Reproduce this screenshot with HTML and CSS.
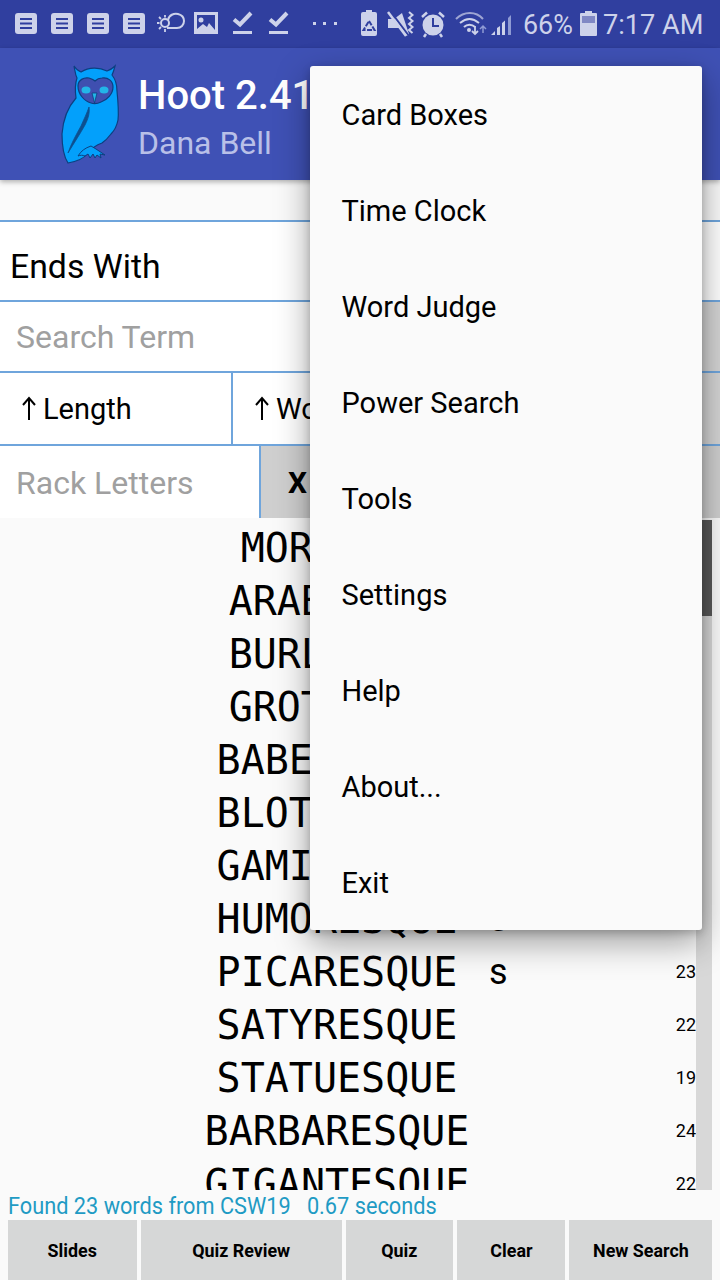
FILE: index.html
```html
<!DOCTYPE html>
<html lang="en">
<head>
<meta charset="utf-8">
<title>Hoot</title>
<link rel="stylesheet" href="styles.css">
</head>
<body>
<div class="screen">
  <div class="status">
    <svg class="status-left" width="345" height="48" viewBox="0 0 345 48">
      <defs>
        <g id="doc"><rect x="0" y="0" width="22" height="21" rx="3" fill="#cdd2ea"/><path d="M5 6h12M5 10.500h12M5 15h12" stroke="#303f9f" stroke-width="2"/></g>
        <g id="chk"><path d="M1 7.500l6 5L18 1" fill="none" stroke="#cdd2ea" stroke-width="4"/><rect x="0" y="19" width="19" height="3" fill="#cdd2ea"/></g>
        <path id="up" d="M7 24V2M1 9l6-7 6 7" fill="none" stroke="#000" stroke-width="2"/>
      </defs>
      <use href="#doc" x="15" y="13"/>
      <use href="#doc" x="51" y="13"/>
      <use href="#doc" x="87" y="13"/>
      <use href="#doc" x="123" y="13"/>
      <g fill="none" stroke="#cdd2ea" stroke-width="2">
        <path d="M168 20c1-5 6-7 10-6 4 1 6 4 6 7 0 4-3 7-7 7h-10"/>
        <circle cx="165" cy="23" r="4"/>
        <path d="M157 23h2.500M165 15v2.500M165 29v3M159 17l2 2M159 29l2-2" stroke-width="1.800"/>
      </g>
      <path fill="#cdd2ea" fill-rule="evenodd" d="M194 12h24v22h-24zM197 15v14l6-5 4 3 2-4 6 7v-15zM201 17.500a2.500 2.500 0 1 1 0 5 2.500 2.500 0 0 1 0-5z"/>
      <use href="#chk" x="233" y="12"/>
      <use href="#chk" x="269" y="12"/>
      <g fill="#cdd2ea"><rect x="313" y="22" width="3" height="3"/><rect x="323" y="22" width="3" height="3"/><rect x="334" y="22" width="3" height="3"/></g>
    </svg>
    <svg class="status-mid" width="160" height="48" viewBox="360 0 160 48">
      <path fill="#cdd2ea" d="M363 12h3v-2h6v2h3a2 2 0 0 1 2 2v20a2 2 0 0 1-2 2h-12a2 2 0 0 1-2-2v-20a2 2 0 0 1 2-2z"/>
      <path d="M369 21l5.500 9h-11z" fill="none" stroke="#303f9f" stroke-width="2" stroke-dasharray="5 1.500"/>
      <path fill="#cdd2ea" d="M388 19h6l8-6 7 21-2 2-7-8h-12z"/>
      <path d="M391 12l18 24" stroke="#303f9f" stroke-width="2"/>
      <path d="M388 12l18 24" stroke="#cdd2ea" stroke-width="2.500"/>
      <path d="M409 12l3.500 3-3.500 3 3.500 3-3.500 3 3.500 3-3.500 3 3.500 3" fill="none" stroke="#cdd2ea" stroke-width="2"/>
      <circle cx="433" cy="25" r="10.500" fill="#cdd2ea"/>
      <path d="M433 18v8h6" fill="none" stroke="#303f9f" stroke-width="2"/>
      <path d="M422 17l5-4.500M444 17l-5-4.500M426 34l-2 3M440 34l2 3" stroke="#cdd2ea" stroke-width="2.500"/>
      <g fill="none" stroke="#cdd2ea"><path d="M456 19c8-8 20-8 27 0" stroke-width="2" opacity=".7"/><path d="M460 23c6-5 13-5 19 0" stroke-width="2"/><path d="M464 27c3-3 8-3 11 0" stroke-width="2"/></g>
      <circle cx="469" cy="30" r="2" fill="#cdd2ea"/>
      <path d="M475 26v8M472 31l3 3 3-3" fill="none" stroke="#cdd2ea" stroke-width="1.800"/>
      <path d="M483 33v-7M480 29l3-3 3 3" fill="none" stroke="#8f9bd4" stroke-width="1.500"/>
      <g fill="#cdd2ea"><path d="M491 35l4-4v4zM497 35v-7l3-2v9zM502 35v-12l3-2.500v14.500z"/></g>
      <path d="M508 35v-17l3-3v20z" fill="#8f9bd4"/>
    </svg>
    <span class="pct">66%</span>
    <svg class="batt" width="17" height="25" viewBox="0 0 17 25">
      <path fill="#cdd2ea" d="M5 0h7v2h4a1 1 0 0 1 1 1v21a1 1 0 0 1-1 1h-15a1 1 0 0 1-1-1v-21a1 1 0 0 1 1-1h4z"/>
      <rect x="2" y="5" width="13" height="7" fill="#8088c4"/>
    </svg>
    <span class="clock">7:17 AM</span>
  </div>

  <header class="appbar">
    <svg class="owl" width="60" height="100" viewBox="60 64 60 100">
      <path fill="#03a0fb" stroke="#0d3f80" stroke-width="1.200" d="M74 66C76 69 78 71 81 72C89 67 99 67 107 71C110 70 113 68 115 66C114 70 113 73 112 75C116 80 117 86 117 91C118 101 119 111 118 120C117 125 115 130 111 134C108 138 105 141 102 143C96 145 91 149 87 154C84 158 80 161 68 163C64 157 62 148 62 134C63 120 68 107 76 98C75 91 75 84 77 78C75 74 75 70 74 66Z"/>
      <path fill="#3f4fb0" stroke="#0d3f80" stroke-width="1.200" d="M78 86c0-6 6-9 11-8 3 1 5 2 6 3 2-2 4-3 7-3 6-1 11 3 11 9 0 7-6 13-12 15-4 2-7 2-10 1-7-2-13-9-13-17z"/>
      <ellipse cx="86" cy="90" rx="4.500" ry="3.500" fill="#23b5e8"/>
      <ellipse cx="104" cy="90" rx="4.500" ry="3.500" fill="#23b5e8"/>
      <path d="M92 93h5l-2.500 10z" fill="#23b5e8" stroke="#0d3f80" stroke-width=".8"/>
      <path d="M89 107c1 6-1 12-4 18-5 9-11 18-17 28 3-9 8-18 13-27 3-7 6-13 8-19z" fill="#0d4f8f" stroke="#0d4f8f" stroke-width=".8"/>
      <path d="M78 156c3-5 7-8 13-10l5 3 9 6-5-1 1 4-4-3-2 3-2-4-3 4-2-4-3 2c-2-1-5-1-7 0z" fill="#03a0fb" stroke="#0d3f80" stroke-width="1"/>
    </svg>
    <div class="titles">
      <div class="title">Hoot 2.41</div>
      <div class="subtitle">Dana Bell</div>
    </div>
  </header>

  <main class="content">
    <div class="form">
      <div class="row row-type"><span class="type-text">Ends With</span></div>
      <div class="row row-search">
        <span class="placeholder search-ph">Search Term</span>
        <span class="side-btn"></span>
      </div>
      <div class="row row-order">
        <span class="order order-first"><svg class="arrow" width="14" height="25" viewBox="0 0 14 25"><use href="#up"/></svg>Length</span>
        <span class="order order-second"><svg class="arrow" width="14" height="25" viewBox="0 0 14 25"><use href="#up"/></svg>Word</span>
        <span class="side-btn"></span>
      </div>
      <div class="row row-rack">
        <span class="placeholder rack-ph">Rack Letters</span>
        <span class="clear-x">X</span>
      </div>
    </div>

    <div class="results">
      <div class="words">
        <div class="word-row"><span class="word">MORESQUE</span><span class="hook"></span><span class="num">19</span></div>
        <div class="word-row"><span class="word">ARABESQUE</span><span class="hook"></span><span class="num">19</span></div>
        <div class="word-row"><span class="word">BURLESQUE</span><span class="hook"></span><span class="num">20</span></div>
        <div class="word-row"><span class="word">GROTESQUE</span><span class="hook"></span><span class="num">20</span></div>
        <div class="word-row"><span class="word">BABELESQUE</span><span class="hook"></span><span class="num">22</span></div>
        <div class="word-row"><span class="word">BLOTTESQUE</span><span class="hook"></span><span class="num">21</span></div>
        <div class="word-row"><span class="word">GAMINESQUE</span><span class="hook"></span><span class="num">22</span></div>
        <div class="word-row"><span class="word">HUMORESQUE</span><span class="hook">s</span><span class="num">23</span></div>
        <div class="word-row"><span class="word">PICARESQUE</span><span class="hook">s</span><span class="num">23</span></div>
        <div class="word-row"><span class="word">SATYRESQUE</span><span class="hook"></span><span class="num">22</span></div>
        <div class="word-row"><span class="word">STATUESQUE</span><span class="hook"></span><span class="num">19</span></div>
        <div class="word-row"><span class="word">BARBARESQUE</span><span class="hook"></span><span class="num">24</span></div>
        <div class="word-row"><span class="word">GIGANTESQUE</span><span class="hook"></span><span class="num">22</span></div>
      </div>
      <div class="scrollbar"><div class="thumb"></div></div>
    </div>

    <div class="found"><span class="found-text">Found 23 words from CSW19   0.67 seconds</span></div>

    <div class="buttons">
      <span class="btn"><span class="btn-label">Slides</span></span>
      <span class="btn"><span class="btn-label">Quiz Review</span></span>
      <span class="btn"><span class="btn-label">Quiz</span></span>
      <span class="btn"><span class="btn-label">Clear</span></span>
      <span class="btn"><span class="btn-label">New Search</span></span>
    </div>
  </main>

  <nav class="menu">
    <div class="menu-item">Card Boxes</div>
    <div class="menu-item">Time Clock</div>
    <div class="menu-item">Word Judge</div>
    <div class="menu-item">Power Search</div>
    <div class="menu-item">Tools</div>
    <div class="menu-item">Settings</div>
    <div class="menu-item">Help</div>
    <div class="menu-item">About...</div>
    <div class="menu-item">Exit</div>
  </nav>
</div>
</body>
</html>
```

FILE: styles.css
```css
* { box-sizing: border-box; }
html, body { margin: 0; padding: 0; }
body { font-family: Roboto, "Noto Sans", sans-serif; background: #fafafa; color: #000; }

.screen { position: relative; width: 720px; height: 1280px; overflow: hidden; display: flex; flex-direction: column; background: #fafafa; }

.status { height: 48px; flex: none; background: #303f9f; display: flex; align-items: center; color: #cdd2ea; }
.status-left { flex: none; margin-right: 15px; }
.status-mid { flex: none; }
.pct { font-size: 28px; width: 57px; margin-left: 3px; transform: scaleX(.96); transform-origin: left center; white-space: nowrap; }
.batt { flex: none; margin-top: -1px; }
.clock { font-size: 28px; margin-left: 6px; white-space: nowrap; transform: scaleX(.97); transform-origin: left center; }

.appbar { height: 132px; flex: none; background: #3f51b5; display: flex; align-items: flex-start; padding-left: 60px; box-shadow: 0 2px 5px rgba(0,0,0,.3); position: relative; z-index: 1; }
.owl { flex: none; margin-top: 16px; }
.titles { margin-left: 18px; padding-top: 23px; }
.title { font-size: 40px; font-weight: 500; line-height: 49px; color: #fff; white-space: nowrap; }
.subtitle { font-size: 32px; line-height: 46px; color: #b9c0e8; white-space: nowrap; }

.content { flex: 1; min-height: 0; display: flex; flex-direction: column; padding-top: 40px; }

.form { flex: none; }
.row { display: flex; background: #fff; border-top: 2px solid #6fa5dc; }
.row-type { height: 80px; align-items: center; padding: 10px 0 0 10px; font-size: 33.800px; }
.row-search { height: 71px; font-size: 32px; }
.row-order { height: 73px; font-size: 29px; }
.row-rack { height: 74px; font-size: 32px; }
.placeholder { color: #a0a0a0; display: flex; align-items: center; padding-left: 16px; }
.search-ph { flex: 1; }
.side-btn { width: 120px; background: #d4d4d4; }
.order { display: flex; align-items: center; }
.order-first { width: 233px; padding-left: 22px; border-right: 2px solid #6fa5dc; }
.order-second { flex: 1; padding-left: 22px; }
.arrow { flex: none; margin-right: 7px; }
.rack-ph { width: 259px; padding-top: 2px; }
.clear-x { flex: 1; background: #cfcfcf; border-left: 2px solid #6fa5dc; font-weight: 700; display: flex; align-items: center; padding-left: 27px; font-size: 30px; }

.results { flex: 1; min-height: 0; display: flex; padding-top: 2px; padding-right: 8px; overflow: hidden; }
.words { flex: 1; min-width: 0; overflow: hidden; padding-top: 1px; }
.word-row { height: 53.08px; display: grid; grid-template-columns: 204px 266px 1fr 28px; align-items: center; }
.word { grid-column: 2; font-family: "DejaVu Sans Mono", "Liberation Mono", monospace; font-size: 40px; text-align: center; white-space: nowrap; justify-self: center; }
.hook { grid-column: 3; font-size: 36px; padding-left: 19px; line-height: 1; }
.num { grid-column: 4; font-size: 18px; text-align: right; padding-bottom: 2px; }
.scrollbar { flex: none; width: 16px; background: #d8d8d8; }
.thumb { height: 96px; background: #595959; }

.found { flex: none; height: 30px; line-height: 33px; padding-left: 8px; font-size: 23px; color: #1f9bc4; white-space: pre; }
.found-text { display: inline-block; transform: scaleX(.945); transform-origin: left center; }

.buttons { flex: none; height: 60px; display: grid; grid-template-columns: 129px 201px 107px 108px 143px; gap: 4px; padding: 0 8px; }
.btn { background: #d6d7d7; display: flex; align-items: center; justify-content: center; font-size: 19px; font-weight: 700; }
.btn-label { display: inline-block; transform: scaleX(.94); white-space: nowrap; }

.menu { position: absolute; left: 310px; top: 66px; width: 392px; height: 864px; background: #fafafa; border-radius: 3px; z-index: 2; box-shadow: 0 12px 34px rgba(0,0,0,.38), 0 3px 8px rgba(0,0,0,.2); }
.menu-item { height: 96px; display: flex; align-items: center; padding: 2px 0 0 31.500px; font-size: 29px; }
```
